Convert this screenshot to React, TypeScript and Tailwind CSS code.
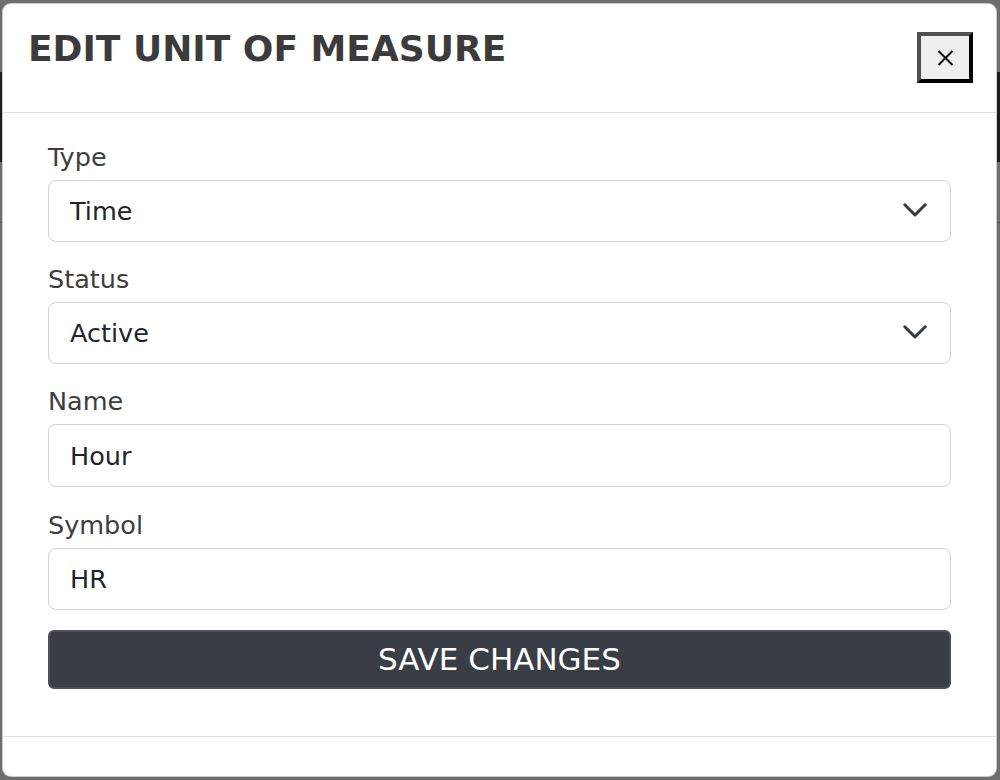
import { useState } from 'react';

const font = { fontFamily: '"DejaVu Sans", "Liberation Sans", sans-serif' };

function Chevron() {
  return (
    <svg width="24" height="14" viewBox="0 0 24 14" fill="none" className="pointer-events-none">
      <path d="M1.8 1.8 L12 12 L22.2 1.8" stroke="#343a40" strokeWidth="3" strokeLinecap="round" strokeLinejoin="round" />
    </svg>
  );
}

function SelectField({ label, value, options, onChange }: { label: string; value: string; options: string[]; onChange: (v: string) => void }) {
  return (
    <div className="mb-[18px]">
      <label className="block text-[25.5px] leading-[38px] text-[#3d3d3d] mb-[4px]">{label}</label>
      <div className="relative">
        <select
          value={value}
          onChange={(e) => onChange(e.target.value)}
          className="appearance-none w-full h-[62px] pl-[21px] pr-12 border-[1.5px] border-[#ced4da] rounded-[8px] bg-white text-[25.5px] text-[#212529] outline-none"
          style={font}
        >
          {options.map((o) => (
            <option key={o}>{o}</option>
          ))}
        </select>
        <div className="absolute right-[24px] top-[23px]">
          <Chevron />
        </div>
      </div>
    </div>
  );
}

function TextField({ label, value, onChange, tall }: { label: string; value: string; onChange: (v: string) => void; tall?: boolean }) {
  return (
    <div className={tall ? 'mb-[19px]' : 'mb-[18px]'}>
      <label className="block text-[25.5px] leading-[38px] text-[#3d3d3d] mb-[4px]">{label}</label>
      <input
        type="text"
        value={value}
        onChange={(e) => onChange(e.target.value)}
        className={`w-full ${tall ? 'h-[63px]' : 'h-[62px]'} pl-[21px] pr-4 border-[1.5px] border-[#ced4da] rounded-[8px] bg-white text-[25.5px] text-[#212529] outline-none`}
        style={font}
      />
    </div>
  );
}

export default function App() {
  const [type, setType] = useState('Time');
  const [status, setStatus] = useState('Active');
  const [name, setName] = useState('Hour');
  const [symbol, setSymbol] = useState('HR');

  return (
    <div className="relative w-[1000px] h-[780px] bg-[#6e6e6e] overflow-hidden" style={font}>
      {/* dimmed page behind the modal */}
      <div className="h-[72px]" />
      <div className="h-[90px] bg-[#1d1d1d]" />
      <div className="h-[60px]" />
      <div className="h-[1px] bg-[#5e5e5e]" />

      <div className="absolute left-[2px] top-[3px] w-[995px] h-[774px] bg-white border border-black/20 rounded-[9px] flex flex-col">
        <div className="flex justify-between items-start h-[109px] border-b border-[#dee2e6] pl-[25px] pr-[23px]">
          <h1 className="mt-[23px] text-[36px] leading-[43px] font-bold text-[#3b3b3b]">EDIT UNIT OF MEASURE</h1>
          <button
            type="button"
            className="mt-[28px] w-[56px] h-[51px] flex items-center justify-center bg-[#efefef] border-4 border-t-[#505050] border-l-[#505050] border-r-black border-b-black"
          >
            <svg width="17" height="16" viewBox="0 0 17 16">
              <path d="M1.5 1 L15.5 15 M15.5 1 L1.5 15" stroke="#111" strokeWidth="2" />
            </svg>
          </button>
        </div>

        <form onSubmit={(e) => e.preventDefault()} className="px-[45px] pt-[25px] h-[624px] border-b border-[#dee2e6]">
          <SelectField label="Type" value={type} options={['Time', 'Weight', 'Length', 'Volume']} onChange={setType} />
          <SelectField label="Status" value={status} options={['Active', 'Inactive']} onChange={setStatus} />
          <TextField label="Name" value={name} onChange={setName} tall />
          <TextField label="Symbol" value={symbol} onChange={setSymbol} />
          <button
            type="submit"
            className="mt-[2px] w-full h-[59px] bg-[#393e46] border-2 border-[#4d5157] rounded-[6px] text-white text-[31px] leading-none"
          >
            SAVE CHANGES
          </button>
        </form>

        <div className="flex-1" />
      </div>
    </div>
  );
}
